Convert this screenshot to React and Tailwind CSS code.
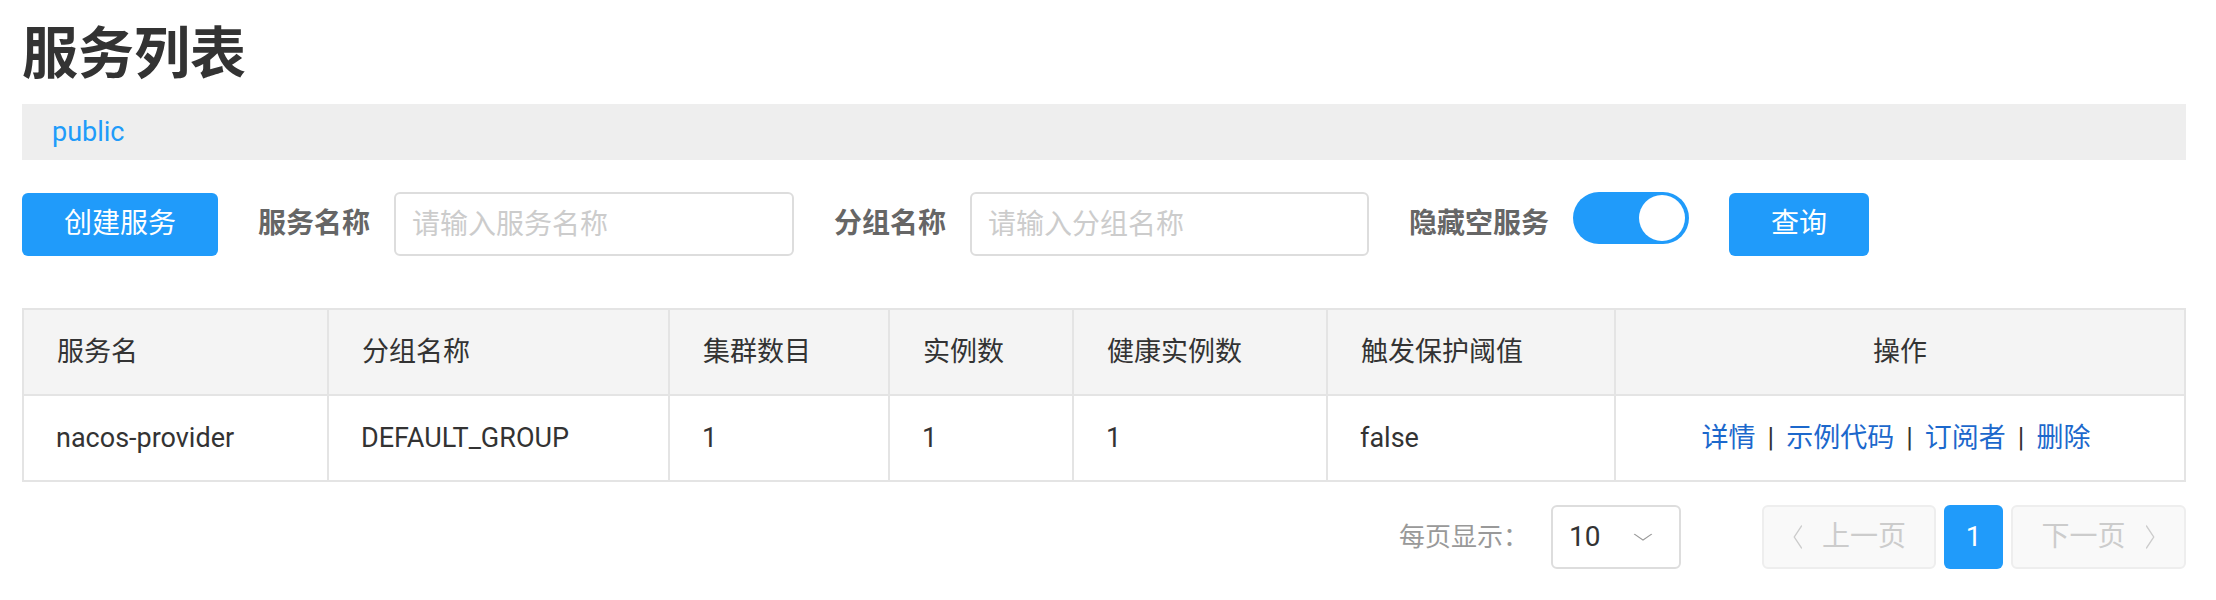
import React, { useState } from "react";

const font = { fontFamily: 'Roboto, "Noto Sans CJK SC", "Noto Sans", sans-serif' };

const columns = [
  { title: "服务名", width: "w-[305px]" },
  { title: "分组名称", width: "w-[341px]" },
  { title: "集群数目", width: "w-[220px]" },
  { title: "实例数", width: "w-[184px]" },
  { title: "健康实例数", width: "w-[254px]" },
  { title: "触发保护阈值", width: "w-[288px]" },
  { title: "操作", width: "flex-1", center: true },
];

const rows = [
  ["nacos-provider", "DEFAULT_GROUP", "1", "1", "1", "false"],
];

const Chevron = ({ dir = "down", className = "" }) => (
  <svg viewBox="0 0 16 16" className={className} fill="none" stroke="currentColor" strokeWidth="1.2" preserveAspectRatio="none">
    {dir === "down" && <polyline points="1,4 8,12 15,4" />}
    {dir === "left" && <polyline points="13,1 3,8 13,15" />}
    {dir === "right" && <polyline points="3,1 13,8 3,15" />}
  </svg>
);

const SearchItem = ({ label, children }) => (
  <div className="flex items-center gap-[24px]">
    <span className="text-[28px] font-bold text-[#666]">{label}</span>
    {children}
  </div>
);

export default function App() {
  const [hideEmpty, setHideEmpty] = useState(true);

  return (
    <div className="w-[2216px] h-[600px] bg-white pl-[22px] pr-[30px] text-[#333]" style={font}>
      {/* title */}
      <div className="h-[104px] flex items-center">
        <h1 className="text-[56px] font-bold leading-none text-[#333] pt-[4px]">服务列表</h1>
      </div>

      {/* namespace bar */}
      <div className="h-[56px] bg-[#eeeeee] flex items-center pl-[30px]">
        <span className="text-[27px] text-[#209bfa]">public</span>
      </div>

      {/* search row */}
      <div className="mt-[32px] h-[64px] flex items-center gap-[40px]">
        <button className="w-[196px] h-[63px] rounded-[6px] bg-[#209bfa] text-white text-[28px]">
          创建服务
        </button>
        <SearchItem label="服务名称">
          <input
            placeholder="请输入服务名称"
            className="w-[400px] h-[64px] rounded-[6px] border-2 border-[#dddddd] pl-[16px] text-[28px] placeholder:text-[#cccccc] outline-none"
          />
        </SearchItem>
        <SearchItem label="分组名称">
          <input
            placeholder="请输入分组名称"
            className="w-[399px] h-[64px] rounded-[6px] border-2 border-[#dddddd] pl-[16px] text-[28px] placeholder:text-[#cccccc] outline-none"
          />
        </SearchItem>
        <SearchItem label="隐藏空服务">
          <button
            onClick={() => setHideEmpty(!hideEmpty)}
            className="mb-[12px] w-[116px] h-[52px] rounded-full bg-[#209bfa] flex items-center justify-end pr-[4px]"
          >
            <span className="w-[46px] h-[46px] rounded-full bg-white" />
          </button>
        </SearchItem>
        <button className="w-[140px] h-[63px] rounded-[6px] bg-[#209bfa] text-white text-[28px]">
          查询
        </button>
      </div>

      {/* table */}
      <div className="mt-[52px] border-2 border-[#e4e4e4] text-[27px]">
        <div className="flex h-[84px] bg-[#f4f4f4]">
          {columns.map((c, i) => (
            <div
              key={c.title}
              className={`${c.width} flex items-center ${c.center ? "justify-center" : "pl-[33px]"} ${
                i < columns.length - 1 ? "border-r-2 border-[#e4e4e4]" : ""
              }`}
            >
              {c.title}
            </div>
          ))}
        </div>
        {rows.map((r) => (
          <div key={r[0]} className="flex h-[86px] border-t-2 border-[#e4e4e4]">
            {r.map((cell, i) => (
              <div key={i} className={`${columns[i].width} flex items-center pl-[32px] border-r-2 border-[#e4e4e4]`}>
                {cell}
              </div>
            ))}
            <div className="flex-1 flex items-center justify-center gap-[12px] text-[#1c68cc] pr-[8px]">
              <a>详情</a>
              <span className="text-[#333]">|</span>
              <a>示例代码</a>
              <span className="text-[#333]">|</span>
              <a>订阅者</a>
              <span className="text-[#333]">|</span>
              <a>删除</a>
            </div>
          </div>
        ))}
      </div>

      {/* pagination */}
      <div className="mt-[23px] flex items-center justify-end">
        <span className="text-[26px] text-[#999]">每页显示：</span>
        <div className="ml-[22px] w-[130px] h-[64px] rounded-[6px] border-2 border-[#dddddd] flex items-center justify-between pl-[16px] pr-[26px]">
          <span className="text-[28px] text-[#333]">10</span>
          <Chevron dir="down" className="w-[20px] h-[12px] text-[#999]" />
        </div>
        <div className="ml-[81px] flex items-center gap-[8px]">
          <button className="w-[174px] h-[64px] rounded-[6px] border-2 border-[#eeeeee] bg-[#f9f9f9] text-[#cccccc] text-[28px] flex items-center justify-center gap-[18px]">
            <Chevron dir="left" className="w-[12px] h-[26px]" />
            上一页
          </button>
          <button className="w-[59px] h-[64px] rounded-[6px] bg-[#209bfa] text-white text-[28px]">1</button>
          <button className="w-[175px] h-[64px] rounded-[6px] border-2 border-[#eeeeee] bg-[#f9f9f9] text-[#cccccc] text-[28px] flex items-center justify-center gap-[18px]">
            下一页
            <Chevron dir="right" className="w-[12px] h-[26px]" />
          </button>
        </div>
      </div>
    </div>
  );
}
